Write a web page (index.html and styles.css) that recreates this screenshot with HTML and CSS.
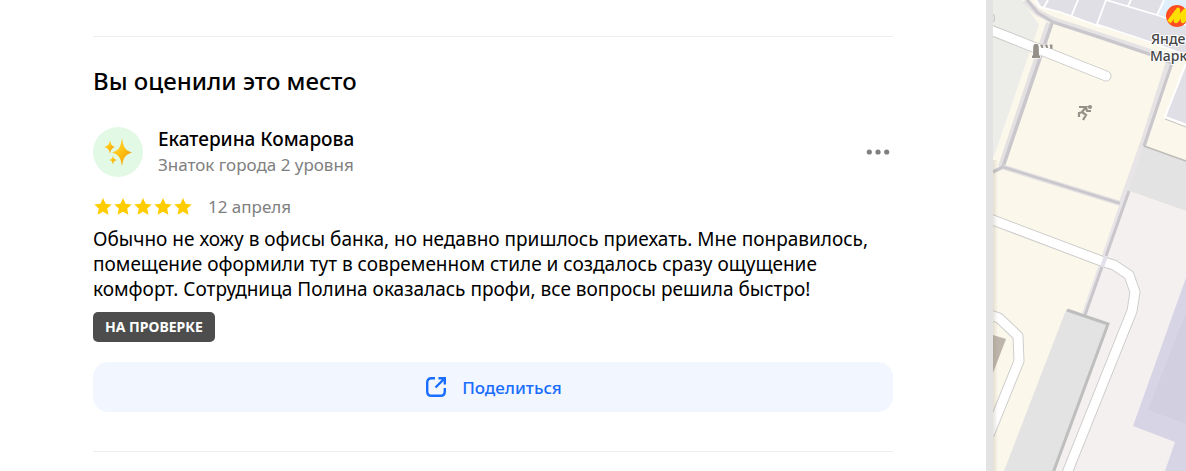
FILE: index.html
```html
<!DOCTYPE html>
<html lang="ru">
<head>
<meta charset="utf-8">
<meta name="viewport" content="width=device-width, initial-scale=1">
<title>Вы оценили это место</title>
<link rel="stylesheet" href="styles.css">
</head>
<body>
<div class="page">
  <main class="content">
    <section class="review-section">
      <h2 class="section-title">Вы оценили это место</h2>
      <article class="review">
        <header class="author">
          <span class="avatar">
            <svg width="30" height="30" viewBox="0 0 30 30" aria-hidden="true">
              <defs>
                <linearGradient id="gold" x1="0" y1="0" x2="1" y2="1">
                  <stop offset="0" stop-color="#ffe04a"/>
                  <stop offset=".5" stop-color="#ffc010"/>
                  <stop offset="1" stop-color="#e88c10"/>
                </linearGradient>
              </defs>
              <g fill="url(#gold)">
                <path d="M19 1C20.500 10 21.500 13 29 15.500C21.500 18 20.500 21 19 29C17.500 21 16.500 18 9 15.500C16.500 13 17.500 10 19 1Z"/>
                <path d="M7 3C7.800 7.500 8.500 8.500 12 10C8.500 11.500 7.800 12.500 7 17C6.200 12.500 5.500 11.500 1 10C5.500 8.500 6.200 7.500 7 3Z"/>
                <path d="M10 18C10.500 21.500 11 22 14 23C11 24 10.500 24.500 10 28C9.500 24.500 9 24 6 23C9 22 9.500 21.500 10 18Z"/>
              </g>
            </svg>
          </span>
          <div class="author-text">
            <div class="author-name">Екатерина Комарова</div>
            <div class="author-level">Знаток города 2 уровня</div>
          </div>
          <button class="more" type="button" aria-label="Ещё">
            <svg width="24" height="24" viewBox="0 0 24 24" fill="#808080" aria-hidden="true">
              <circle cx="3.300" cy="12" r="2.600"/><circle cx="12" cy="12" r="2.600"/><circle cx="20.700" cy="12" r="2.600"/>
            </svg>
          </button>
        </header>
        <div class="rating-row">
          <svg class="stars" width="100" height="20" viewBox="0 0 100 20" fill="#ffcc00" role="img" aria-label="Оценка 5 из 5">
            <defs><path id="star" d="M10 1L12.600 6.700L18.700 7.400L14.200 11.500L15.400 17.700L10 14.700L4.600 17.700L5.800 11.500L1.300 7.400L7.400 6.700Z"/></defs>
            <use href="#star"/><use href="#star" x="20"/><use href="#star" x="40"/><use href="#star" x="60"/><use href="#star" x="80"/>
          </svg>
          <span class="date">12 апреля</span>
        </div>
        <p class="review-text">Обычно не хожу в офисы банка, но недавно пришлось приехать. Мне понравилось,<br>помещение оформили тут в современном стиле и создалось сразу ощущение<br>комфорт. Сотрудница Полина оказалась профи, все вопросы решила быстро!</p>
        <span class="status">НА ПРОВЕРКЕ</span>
        <button class="share" type="button">
          <svg width="24" height="24" viewBox="0 0 24 24" fill="none" stroke="#196dff" stroke-width="2.400" aria-hidden="true">
            <path d="M11 3.200H7.500Q3.200 3.200 3.200 7.500V16.500Q3.200 20.800 7.500 20.800H16.500Q20.800 20.800 20.800 16.500V13"/>
            <path d="M11.500 12.500L20 4M14.500 3.200H20.800V9.500"/>
          </svg>
          Поделиться
        </button>
      </article>
    </section>
  </main>
  <aside class="map" aria-label="Карта">
    <svg class="map-canvas" viewBox="993 0 193 471" preserveAspectRatio="xMinYMin slice" aria-hidden="true">
      <defs>
        <linearGradient id="edge"><stop offset="0" stop-color="#857c60" stop-opacity=".2"/><stop offset="1" stop-color="#857c60" stop-opacity="0"/></linearGradient>
      </defs>
      <rect x="993" width="193" height="471" fill="#fbf7eb"/>
      <path fill="#ecede8" d="M993 0H1022L1039 25L994 156L993 157Z"/>
      <path fill="#e0dfe5" d="M1036 0L1041 6L1060 12L1101 26L1148 42L1186 55V0Z"/>
      <path fill="#e1effc" d="M1164 0L1158 14L1186 24V0Z"/>
      <g fill="none" stroke="#fff" stroke-width="1.800">
        <path d="M1036 0L1040 7L1060 12L1101 27M1044 7L1048 0M1071 17L1078 0M1096 27L1106 0L1157 15L1186 25M1128 6L1131 0M1157 15L1164 0M1096 24L1150 42L1186 55"/>
      </g>
      <g fill="none" stroke-linejoin="round">
        <path stroke="#e6e3e4" stroke-width="7" d="M1025 0L1037 12L1052 20L1149 52L1170 60L1143 145L1122 204"/>
        <path stroke="#c9c7cc" stroke-width="3" d="M1027 0L1038 13L1053 22L1102 38L1149 54L1172 63L1144 146"/>
        <path stroke="#e4e1e3" stroke-width="6" d="M1049 23L1001 167"/>
        <path stroke="#c9c7cc" stroke-width="3.500" d="M1052 23L1003 167L993 172"/>
        <path stroke="#e4e1e3" stroke-width="5" d="M1003 167L1122 204"/>
        <path stroke="#c9c7cc" stroke-width="2.500" d="M1003 167L1122 204"/>
      </g>
      <path fill="#e0dfe5" stroke="#fff" stroke-width="2" d="M1187 61L1165 117L1187 125"/>
      <path fill="none" stroke="#c4c2c7" d="M1165 119L1186 127"/>
      <path fill="#e3e3e3" d="M1144 146L1186 161V211L1129 191Z"/>
      <path fill="none" stroke="#bebcb9" stroke-width="1.500" d="M1144 146L1186 161"/>
      <path fill="#f4f0f0" d="M1129 191L1186 211V471H1050L1104 322L1086 314Z"/>
      <path fill="none" stroke="#e8e5e8" stroke-width="4" d="M1141 148L1084 314"/>
      <path fill="#d7d4e5" d="M1187 275L1133 426L1175 442L1165 471H1187Z"/>
      <path fill="#d2cfe1" d="M1187 310L1148 410L1187 424Z"/>
      <g fill="none" stroke-linejoin="round">
        <path stroke="#cdcdcc" stroke-width="11" stroke-linecap="round" d="M988 29L1106 76"/>
        <path stroke="#fff" stroke-width="9" stroke-linecap="round" d="M988 29L1106 76"/>
        <path stroke="#cdcdcc" stroke-width="11" d="M990 219L1104 262L1114 265L1129 275L1135 292L1132 311L1067 473"/>
        <path stroke="#fff" stroke-width="9" d="M990 219L1104 262L1114 265L1129 275L1135 292L1132 311L1067 473"/>
        <path stroke="#cdcdcc" stroke-width="11" d="M990 315L999 318L1018 336L1019 361L989 435"/>
        <path stroke="#fff" stroke-width="9" d="M990 315L999 318L1018 336L1019 361L989 435"/>
      </g>
      <path fill="none" stroke="#c9c7cc" stroke-width="3" d="M1129 191L1106 256M1102 267L1085 315"/>
      <path fill="none" stroke="#e3e0e9" stroke-width="4" d="M1106 256L1102 267"/>
      <path fill="#bdb5ac" d="M993 335L1006 339L993 373Z"/>
      <path fill="#e3e3e3" d="M1066 310L1108 324L1054 471H1004Z"/>
      <path fill="none" stroke="#bebebe" stroke-width="3" d="M1067 310L1108 324L1053 473"/>
      <path fill="none" stroke="#cdcdcc" stroke-width="1.500" d="M993 14C995 16 995 20 993 22"/>
      <rect x="993" y="160" width="5" height="311" fill="url(#edge)"/>
      <g fill="#969188" stroke="#fff" stroke-width="1.200" paint-order="stroke">
        <path d="M1032 58V55.500H1033L1033.300 46L1034.500 44H1037.500L1038.700 46L1039 55.500H1040V58Z"/>
        <path d="M1040 44.500H1042.500L1043.500 48H1041.500ZM1045 44.500H1047.500L1048 48H1046ZM1049.500 44.500H1052.500V49H1050.500Z"/>
      </g>
      <g fill="none" stroke="#969188" stroke-width="2.200">
        <path d="M1079 107H1086L1082 112L1086 115L1083 120M1086 107L1087 111H1091M1083 112L1079 113V117"/>
        <circle cx="1090" cy="107" r="1" fill="#969188"/>
      </g>
      <circle cx="1177" cy="16" r="11" fill="#ff4f20"/>
      <path fill="none" stroke="#ffdf00" stroke-width="4.500" stroke-linejoin="round" d="M1169 22L1178 10L1176 21L1185 11L1183 21L1188 16"/>
      <g class="map-label"><text x="1151" y="44">Янде</text><text x="1150" y="61">Марк</text></g>
    </svg>
  </aside>
</div>
</body>
</html>
```
FILE: styles.css
```css
* {
  box-sizing: border-box;
}

body {
  margin: 0;
  background: #fff;
  color: #000;
  font-family: "Noto Sans", "Open Sans", sans-serif;
  font-size: 19px;
  line-height: 25px;
}

button {
  border: 0;
  font: inherit;
  cursor: pointer;
}

.page {
  display: grid;
  grid-template-columns: minmax(0, 1fr) 200px;
  min-height: 100vh;
  overflow: hidden;
}

.content {
  padding: 36px 93px 19px;
}

.review-section {
  padding: 28px 0 39px;
  border-top: 1px solid #ededed;
  border-bottom: 1px solid #ededed;
}

.section-title {
  margin: 0 0 30px;
  font-size: 24px;
  font-weight: 500;
  line-height: 32px;
}

.author {
  display: flex;
  align-items: center;
  gap: 15px;
}

.avatar {
  display: grid;
  place-items: center;
  width: 50px;
  height: 50px;
  border-radius: 50%;
  background: #e1f9e5;
}

.author-text {
  flex: 1;
}

.author-name {
  font-size: 19px;
  font-weight: 500;
}

.author-level,
.date {
  color: #808080;
  font-size: 17px;
}

.more {
  display: flex;
  padding: 3px;
  background: transparent;
}

.rating-row {
  display: flex;
  align-items: center;
  gap: 15px;
  margin-top: 17px;
}

.review-text {
  margin: 8px 0 10px;
  white-space: nowrap;
}

.status {
  display: block;
  width: fit-content;
  padding: 0 12px;
  border-radius: 5px;
  background: #4d4d4d;
  color: #fff;
  font-size: 14px;
  font-weight: 700;
  line-height: 30px;
}

.share {
  display: flex;
  align-items: center;
  justify-content: center;
  gap: 14px;
  width: 100%;
  height: 50px;
  margin-top: 20px;
  border-radius: 15px;
  background: #f2f6ff;
  color: #196dff;
  font-size: 17px;
  font-weight: 500;
}

.map {
  position: relative;
  border-left: 7px solid #e3e3e3;
  background: #fbf7eb;
}

.map-canvas {
  position: absolute;
  inset: 0;
  width: 100%;
  height: 100%;
}

.map-label {
  fill: #444;
  stroke: #fff;
  stroke-width: 2px;
  paint-order: stroke;
  font-size: 14px;
  font-weight: 500;
}
```
